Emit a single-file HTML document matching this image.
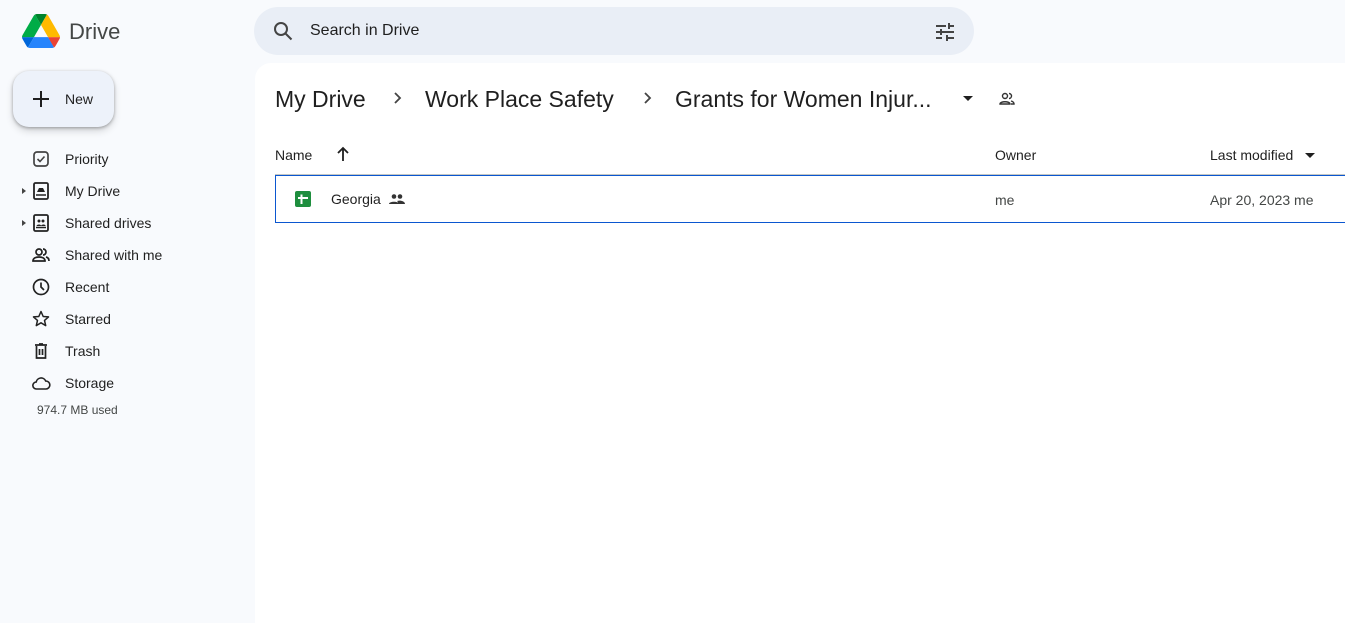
<!DOCTYPE html>
<html><head><style>
*{margin:0;padding:0;box-sizing:border-box}
html,body{height:612px}
body{width:1345px;background:#f8fafd;font-family:"Liberation Sans",Arial,sans-serif;color:#1f1f1f;position:relative;overflow:hidden}
.abs{position:absolute}
.nav{position:absolute;left:0;width:240px;height:32px;font-size:14px;color:#1f1f1f}
.nav span{position:absolute;left:65px;top:8px}
.nav svg{position:absolute;left:31px;top:6px}
.tri{position:absolute;left:22px;top:13px;width:0;height:0;border-top:3px solid transparent;border-bottom:3px solid transparent;border-left:4px solid #444}
</style></head><body>
<svg class="abs" style="left:22px;top:14px" width="38" height="34" viewBox="0 0 87.3 78">
<path d="M6.6 66.85l3.85 6.65c.8 1.4 1.950 2.5 3.3 3.3L27.5 53H0c0 1.55.4 3.1 1.2 4.5z" fill="#0066da"/>
<path d="M43.65 25L29.9 1.2c-1.35.8-2.5 1.9-3.3 3.3L1.2 48.5A9 9 0 000 53h27.5z" fill="#00ac47"/>
<path d="M73.55 76.8c1.35-.8 2.5-1.9 3.3-3.3l1.6-2.75 7.65-13.25c.8-1.4 1.2-2.95 1.2-4.5H59.8l5.85 11.5z" fill="#ea4335"/>
<path d="M43.65 25L57.4 1.2C56.05.4 54.5 0 52.9 0H34.4c-1.6 0-3.15.45-4.5 1.2z" fill="#00832d"/>
<path d="M59.8 53H27.5L13.75 76.8c1.35.8 2.9 1.2 4.5 1.2h50.8c1.6 0 3.15-.45 4.5-1.2z" fill="#2684fc"/>
<path d="M73.4 26.5L60.7 4.5c-.8-1.4-1.950-2.5-3.3-3.3L43.65 25 59.8 53h27.45c0-1.55-.4-3.1-1.2-4.5z" fill="#ffba00"/>
</svg>
<div class="abs" style="left:69px;top:19px;font-size:22px;color:#444746">Drive</div>
<div class="abs" style="left:13px;top:71px;width:101px;height:56px;background:#edf2fa;border-radius:16px;box-shadow:0 1px 3px rgba(0,0,0,.3),0 4px 8px rgba(0,0,0,.15)">
<div class="abs" style="left:20px;top:27px;width:16px;height:2px;background:#1f1f1f"></div>
<div class="abs" style="left:27px;top:20px;width:2px;height:16px;background:#1f1f1f"></div>
<div class="abs" style="left:52px;top:20px;font-size:14px;color:#1f1f1f">New</div>
</div>
<div class="nav" style="top:143px"><svg width="20" height="20" viewBox="0 0 20 20"><rect x="3" y="3" width="14" height="14" rx="3" fill="none" stroke="#444" stroke-width="1.7"/><path d="M6.5 10l2.5 2.5 4.5-5" fill="none" stroke="#444" stroke-width="1.6"/></svg><span>Priority</span></div>
<div class="nav" style="top:175px"><div class="tri"></div><svg width="20" height="20" viewBox="0 0 20 20"><rect x="3" y="2" width="14" height="16" rx="1.5" fill="none" stroke="#222" stroke-width="1.8"/><path d="M6 11h8l-2-4H8z" fill="#222"/><path d="M5 14h10" stroke="#222" stroke-width="1.5"/></svg><span>My Drive</span></div>
<div class="nav" style="top:207px"><div class="tri"></div><svg width="20" height="20" viewBox="0 0 20 20"><rect x="3" y="2" width="14" height="16" rx="1.5" fill="none" stroke="#222" stroke-width="1.8"/><circle cx="8" cy="8" r="1.5" fill="#222"/><circle cx="12" cy="8" r="1.5" fill="#222"/><path d="M5.5 13c0-2 5-2 4.5 0h0c0-2 5-2 4.5 0z" fill="#222"/><path d="M5 14.5h10" stroke="#222" stroke-width="1.5"/></svg><span>Shared drives</span></div>
<div class="nav" style="top:239px"><svg width="20" height="20" viewBox="0 0 20 20"><circle cx="8" cy="7" r="3" fill="none" stroke="#222" stroke-width="1.7"/><path d="M2 16c0-3 3-4 6-4s6 1 6 4z" fill="none" stroke="#222" stroke-width="1.7"/><path d="M12 4a3 3 0 010 6M15 12c2 .5 3 2 3 4" fill="none" stroke="#222" stroke-width="1.7"/></svg><span>Shared with me</span></div>
<div class="nav" style="top:271px"><svg width="20" height="20" viewBox="0 0 20 20"><circle cx="10" cy="10" r="7.5" fill="none" stroke="#222" stroke-width="1.7"/><path d="M10 5.5V10l3 3" fill="none" stroke="#222" stroke-width="1.7"/></svg><span>Recent</span></div>
<div class="nav" style="top:303px"><svg width="20" height="20" viewBox="0 0 20 20"><path d="M10 2.5l2.2 5 5.3.4-4 3.5 1.2 5.2L10 13.8l-4.7 2.8 1.2-5.2-4-3.5 5.3-.4z" fill="none" stroke="#222" stroke-width="1.5" stroke-linejoin="round"/></svg><span>Starred</span></div>
<div class="nav" style="top:335px"><svg width="20" height="20" viewBox="0 0 20 20"><path d="M4 4h12M8 3h4M5.5 5v12h9V5M8.5 8v6M11.5 8v6" fill="none" stroke="#222" stroke-width="1.7"/></svg><span>Trash</span></div>
<div class="nav" style="top:367px"><svg width="20" height="20" viewBox="0 0 20 20"><path d="M5.5 16a3.5 3.5 0 01-.3-7 5 5 0 019.5-1 4 4 0 01.3 8z" fill="none" stroke="#222" stroke-width="1.6"/></svg><span>Storage</span></div>
<div class="abs" style="left:37px;top:403px;font-size:12px;color:#444746">974.7 MB used</div>
<div class="abs" style="left:254px;top:7px;width:720px;height:48px;background:#e9eef6;border-radius:24px">
<svg class="abs" style="left:18px;top:13px" width="22" height="22" viewBox="0 0 22 22"><circle cx="9" cy="9" r="6" fill="none" stroke="#444" stroke-width="2"/><path d="M13.5 13.5l6 6" stroke="#444" stroke-width="2"/></svg>
<div class="abs" style="left:56px;top:15px;font-size:16px;color:#1f1f1f">Search in Drive</div>
<svg class="abs" style="left:680px;top:14px" width="22" height="22" viewBox="0 0 22 22" fill="#444"><rect x="2" y="4" width="10" height="2"/><rect x="14" y="2" width="2" height="6"/><rect x="14" y="4" width="6" height="2"/><rect x="2" y="10" width="4" height="2"/><rect x="6" y="8" width="2" height="6"/><rect x="8" y="10" width="12" height="2"/><rect x="2" y="16" width="6" height="2"/><rect x="12" y="14" width="2" height="6"/><rect x="12" y="16" width="8" height="2"/></svg>
</div>
<div class="abs" style="left:255px;top:63px;width:1100px;height:560px;background:#fff;border-radius:16px 0 0 0">
<div class="abs" style="left:20px;top:23px;font-size:23px;color:#1f1f1f;white-space:nowrap">My Drive</div>
<svg class="abs" style="left:135px;top:28px" width="14" height="14" viewBox="0 0 14 14"><path d="M5 2l5 5-5 5" fill="none" stroke="#444" stroke-width="1.8"/></svg>
<div class="abs" style="left:170px;top:23px;font-size:23px;color:#1f1f1f;white-space:nowrap">Work Place Safety</div>
<svg class="abs" style="left:385px;top:28px" width="14" height="14" viewBox="0 0 14 14"><path d="M5 2l5 5-5 5" fill="none" stroke="#444" stroke-width="1.8"/></svg>
<div class="abs" style="left:420px;top:23px;font-size:23px;color:#1f1f1f;white-space:nowrap">Grants for Women Injur...</div>
<div class="abs" style="left:708px;top:33px;border-left:5px solid transparent;border-right:5px solid transparent;border-top:5px solid #1f1f1f"></div>
<svg class="abs" style="left:743px;top:27px" width="18" height="18" viewBox="0 0 18 18"><circle cx="7" cy="6" r="2.5" fill="none" stroke="#333" stroke-width="1.4"/><path d="M2 14c0-3 10-3 10 0z" fill="none" stroke="#333" stroke-width="1.4"/><path d="M11 3.5a2.5 2.5 0 010 5M13 11c2 .5 3 1.5 3 3h-3" fill="none" stroke="#333" stroke-width="1.4"/></svg>
<div class="abs" style="left:20px;top:84px;font-size:14px">Name</div>
<svg class="abs" style="left:81px;top:83px" width="14" height="16" viewBox="0 0 14 16"><path d="M7 15V2M2 7l5-5 5 5" fill="none" stroke="#1f1f1f" stroke-width="1.8"/></svg>
<div class="abs" style="left:740px;top:84px;font-size:14px">Owner</div>
<div class="abs" style="left:955px;top:84px;font-size:14px">Last modified</div>
<div class="abs" style="left:1050px;top:90px;border-left:5px solid transparent;border-right:5px solid transparent;border-top:5px solid #1f1f1f"></div>
<div class="abs" style="left:20px;top:111px;width:1080px;height:1px;background:#c4c7c5"></div>
<div class="abs" style="left:20px;top:112px;width:1080px;height:48px;border:1px solid #0b57d0"></div>
<svg class="abs" style="left:40px;top:128px" width="16" height="16" viewBox="0 0 16 16"><rect width="16" height="16" rx="2" fill="#1e8e3e"/><path d="M3 7h10M6.5 3.5V13" stroke="#fff" stroke-width="2"/></svg>
<div class="abs" style="left:76px;top:128px;font-size:14px">Georgia</div>
<svg class="abs" style="left:134px;top:129px" width="16" height="14" viewBox="0 0 16 14" fill="#333"><circle cx="5" cy="4.5" r="2.3"/><circle cx="11" cy="4.5" r="2.3"/><path d="M0 12c0-3 10-3 10 0zM9 12c0-1.5 0-2.3-1-3 3-1 8 0 8 3z"/></svg>
<div class="abs" style="left:740px;top:129px;font-size:14px;color:#444746">me</div>
<div class="abs" style="left:955px;top:129px;font-size:14px;color:#444746">Apr 20, 2023 me</div>
</div>
</body></html>
